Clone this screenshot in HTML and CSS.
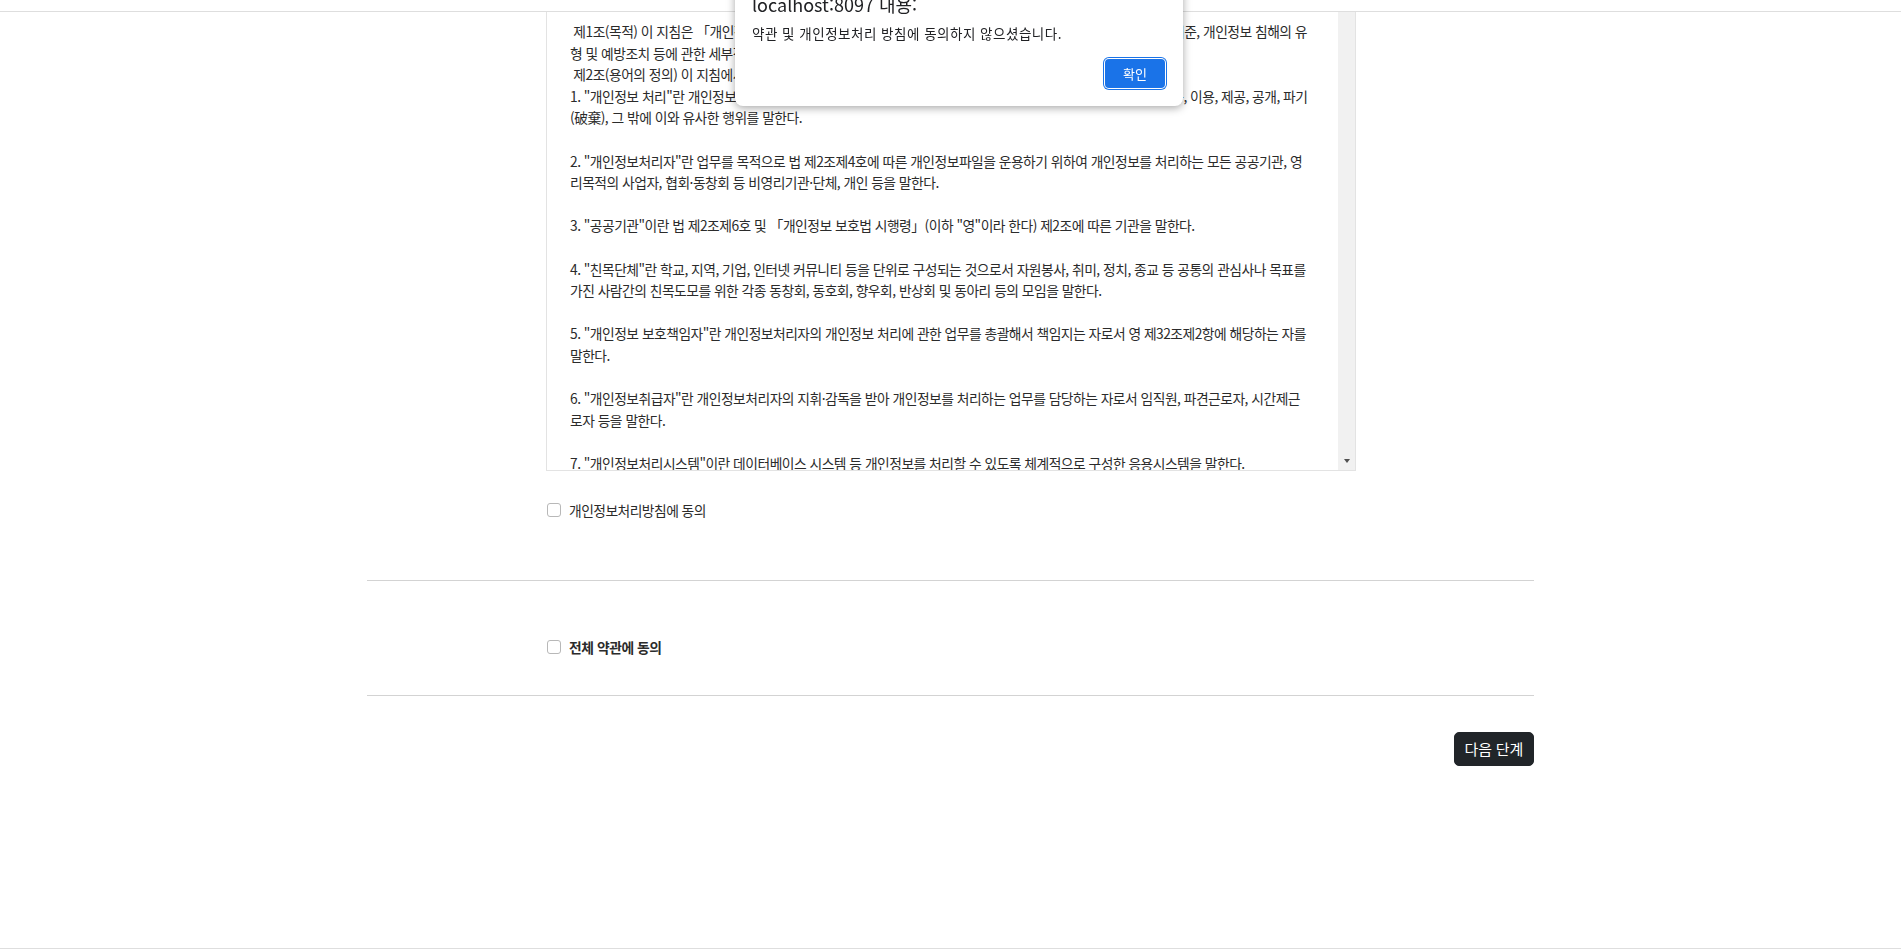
FILE: index.html
```
<!DOCTYPE html>
<html lang="ko">
<head>
<meta charset="utf-8">
<title>약관 동의</title>
<link rel="stylesheet" href="styles.css">
</head>
<body>
<div class="topbar"></div>

<main class="page">
  <section class="terms-col">
    <div class="terms-box">
      <div class="terms-text">
        <p class="clause">&nbsp;제1조(목적) 이 지침은 「개인정보 보호법」(이하 "법"이라 한다) 제12조제1항에 따른 개인정보의 처리에 관한 기준, 개인정보 침해의 유<br>형 및 예방조치 등에 관한 세부적인 사항을 규정함을 목적으로 한다.</p>
        <p class="clause">&nbsp;제2조(용어의 정의) 이 지침에서 사용하는 용어의 뜻은 다음과 같다.</p>
        <p class="item">1. "개인정보 처리"란 개인정보의 수집, 생성, 연계, 연동, 기록, 저장, 보유, 가공, 편집, 검색, 출력, 정정(訂正), 복구, 이용, 제공, 공개, 파기<br>(破棄), 그 밖에 이와 유사한 행위를 말한다.</p>
        <p class="item">2. "개인정보처리자"란 업무를 목적으로 법 제2조제4호에 따른 개인정보파일을 운용하기 위하여 개인정보를 처리하는 모든 공공기관, 영<br>리목적의 사업자, 협회·동창회 등 비영리기관·단체, 개인 등을 말한다.</p>
        <p class="item">3. "공공기관"이란 법 제2조제6호 및 「개인정보 보호법 시행령」(이하 "영"이라 한다) 제2조에 따른 기관을 말한다.</p>
        <p class="item">4. "친목단체"란 학교, 지역, 기업, 인터넷 커뮤니티 등을 단위로 구성되는 것으로서 자원봉사, 취미, 정치, 종교 등 공통의 관심사나 목표를<br>가진 사람간의 친목도모를 위한 각종 동창회, 동호회, 향우회, 반상회 및 동아리 등의 모임을 말한다.</p>
        <p class="item">5. "개인정보 보호책임자"란 개인정보처리자의 개인정보 처리에 관한 업무를 총괄해서 책임지는 자로서 영 제32조제2항에 해당하는 자를<br>말한다.</p>
        <p class="item">6. "개인정보취급자"란 개인정보처리자의 지휘·감독을 받아 개인정보를 처리하는 업무를 담당하는 자로서 임직원, 파견근로자, 시간제근<br>로자 등을 말한다.</p>
        <p class="item">7. "개인정보처리시스템"이란 데이터베이스 시스템 등 개인정보를 처리할 수 있도록 체계적으로 구성한 응용시스템을 말한다.</p>
      </div>
      <div class="scroll-track"><span class="scroll-arrow"></span></div>
    </div>

    <label class="check-row first">
      <input type="checkbox" class="check">
      <span>개인정보처리방침에 동의</span>
    </label>
  </section>

  <div class="divider first"></div>

  <section class="terms-col">
    <label class="check-row all">
      <input type="checkbox" class="check">
      <span>전체 약관에 동의</span>
    </label>
  </section>

  <div class="divider second"></div>

  <div class="actions">
    <button type="button" class="btn-next">다음 단계</button>
  </div>
</main>

<div class="bottombar"></div>

<div class="alert">
  <div class="alert-title">localhost:8097 내용:</div>
  <div class="alert-msg">약관 및 개인정보처리 방침에 동의하지 않으셨습니다.</div>
  <div class="alert-actions">
    <button type="button" class="alert-btn">확인</button>
  </div>
</div>
</body>
</html>
```

FILE: styles.css
```
html, body {
  margin: 0;
  padding: 0;
  background: #fff;
}

body {
  font-family: "Noto Sans CJK KR", "Noto Sans", "Liberation Sans", sans-serif;
  color: #2b2b2b;
}

.topbar {
  position: fixed;
  top: 0;
  left: 0;
  right: 0;
  height: 11px;
  background: #fff;
  border-bottom: 1px solid #dedede;
  z-index: 5;
}

.bottombar {
  position: fixed;
  left: 0;
  right: 0;
  bottom: 0;
  height: 0;
  border-top: 1px solid #dedede;
}

.page {
  width: 1167px;
  margin: 0 auto;
}

.terms-col {
  width: 810px;
  margin: 0 0 0 179px;
}

.terms-box {
  height: 471px;
  box-sizing: border-box;
  border: 1px solid #e3e3e3;
  display: flex;
  overflow: hidden;
}

.terms-text {
  flex: 1;
  padding: 20px 0 0 23px;
  font-size: 13.8px;
  letter-spacing: -0.52px;
  line-height: 21.6px;
  white-space: nowrap;
  overflow: hidden;
  color: #2b2b2b;
}

.terms-text p {
  margin: 0;
}

.terms-text .item {
  margin-bottom: 21.6px;
}

.scroll-track {
  width: 17px;
  flex: none;
  background: #f1f1f1;
  display: flex;
  flex-direction: column;
  justify-content: flex-end;
  align-items: center;
}

.scroll-arrow {
  width: 0;
  height: 0;
  border-left: 3.5px solid transparent;
  border-right: 3.5px solid transparent;
  border-top: 4px solid #505050;
  margin-bottom: 7px;
}

.check-row {
  display: flex;
  align-items: center;
  gap: 8px;
  height: 21px;
  padding-left: 1px;
  font-size: 13.8px;
  letter-spacing: -0.55px;
  color: #2b2b2b;
}

.check-row.first {
  margin-top: 28px;
}

.check-row.all {
  margin-top: 55px;
  font-weight: 700;
  letter-spacing: -0.45px;
}

.check {
  appearance: none;
  -webkit-appearance: none;
  width: 14px;
  height: 14px;
  margin: 0;
  box-sizing: border-box;
  border: 1px solid #b8b8b8;
  border-radius: 3px;
  background: #fff;
}

.divider {
  border-top: 1px solid #d3d3d3;
}

.divider.first {
  margin-top: 60px;
}

.divider.second {
  margin-top: 38px;
}

.actions {
  display: flex;
  justify-content: flex-end;
  margin-top: 36px;
}

.btn-next {
  font-family: inherit;
  background: #212529;
  color: #fff;
  border: 1px solid #212529;
  border-radius: 5px;
  padding: 6px 10px;
  font-size: 15px;
  line-height: 20px;
  letter-spacing: -0.2px;
}

.alert {
  position: fixed;
  left: 735px;
  top: -26px;
  width: 448px;
  box-sizing: border-box;
  padding: 20px 18px 18px 17px;
  background: #fff;
  border-radius: 0 0 8px 8px;
  box-shadow: 0 2px 8px rgba(0, 0, 0, 0.35);
  z-index: 20;
  color: #202124;
}

.alert-title {
  font-size: 18px;
  line-height: 21px;
}

.alert-msg {
  margin-top: 7.5px;
  font-size: 13.5px;
  letter-spacing: 0.5px;
  line-height: 20px;
}

.alert-actions {
  display: flex;
  justify-content: flex-end;
  margin-top: 16.5px;
}

.alert-btn {
  font-family: inherit;
  width: 60px;
  height: 29px;
  padding: 0;
  background: #1a73e8;
  color: #fff;
  border: 0;
  border-radius: 4px;
  box-shadow: 0 0 0 1px #fff, 0 0 0 2px #1a73e8;
  font-size: 13px;
}
```
